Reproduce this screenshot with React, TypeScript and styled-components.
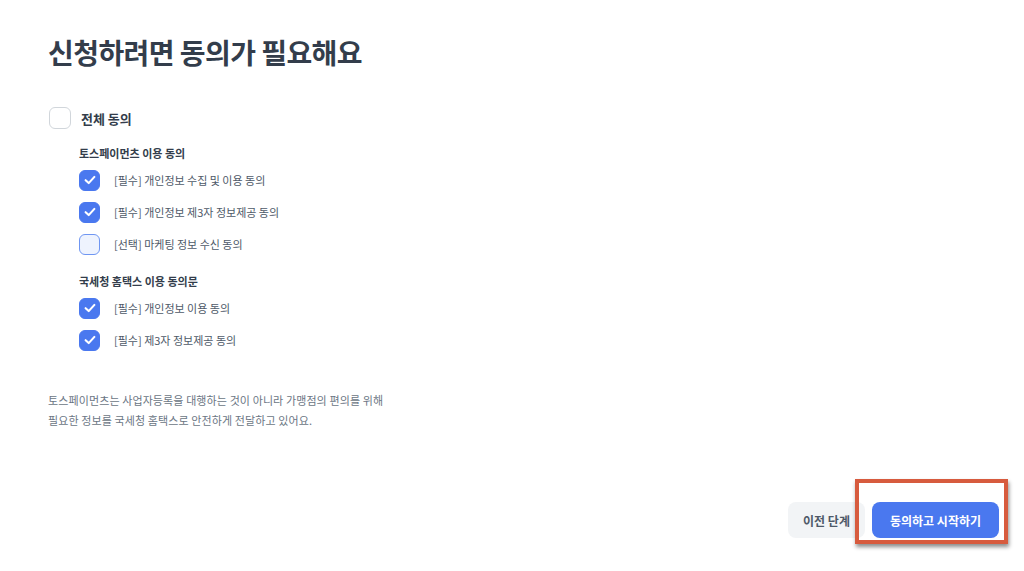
import React, { useState } from 'react';
import styled, { createGlobalStyle } from 'styled-components';

const palette = {
  white: '#ffffff',
  black: '#333d4b',
  grey700: '#4e5968',
  grey600: '#6b7684',
  grey300: '#d1d6db',
  grey100: '#f2f4f6',
  blue: '#4a78ef',
  blueLight: '#eef3fe',
  blueBorder: '#6f96f2',
  red: '#d75b3e',
};

const GlobalStyle = createGlobalStyle`
  html, body {
    margin: 0;
    padding: 0;
    background: ${palette.white};
  }
  body {
    font-family: 'Noto Sans CJK KR', 'Noto Sans', sans-serif;
    color: ${palette.black};
  }
  * {
    box-sizing: border-box;
  }
`;

const Page = styled.div`
  min-height: 100vh;
  display: flex;
  flex-direction: column;
  padding: 34px 25px 33px 48px;
`;

const Title = styled.h1`
  margin: 0;
  font-size: 28px;
  line-height: 36px;
  font-weight: 700;
  letter-spacing: -0.02em;
  color: ${palette.black};
`;

const AllRow = styled.label`
  display: flex;
  align-items: center;
  gap: 10px;
  margin: 37px 0 0 1px;
  height: 22px;
  cursor: pointer;
  font-size: 13px;
  font-weight: 600;
  color: ${palette.black};
`;

const Group = styled.div<{ gap: number }>`
  margin: ${(props) => props.gap}px 0 0 31px;
  display: flex;
  flex-direction: column;
`;

const GroupTitle = styled.div`
  height: 16px;
  line-height: 16px;
  font-size: 11px;
  font-weight: 700;
  color: ${palette.black};
  margin-bottom: 3px;
`;

const Row = styled.label`
  display: flex;
  align-items: center;
  gap: 14px;
  height: 32px;
  cursor: pointer;
  font-size: 11px;
  color: ${palette.grey700};
`;

const Box = styled.span<{ checked: boolean; size: number; soft?: boolean }>`
  flex: none;
  width: ${(props) => props.size}px;
  height: ${(props) => props.size}px;
  border-radius: 6px;
  display: flex;
  align-items: center;
  justify-content: center;
  background: ${(props) =>
    props.checked ? palette.blue : props.soft ? palette.blueLight : palette.white};
  border: 1.5px solid
    ${(props) =>
      props.checked ? palette.blue : props.soft ? palette.blueBorder : palette.grey300};
`;

const Notice = styled.p`
  margin: 34px 0 0;
  font-size: 11px;
  line-height: 20px;
  letter-spacing: 0.01em;
  color: ${palette.grey600};
`;

const Footer = styled.div`
  margin-top: auto;
  display: flex;
  justify-content: flex-end;
  gap: 7px;
`;

const Button = styled.button<{ primary?: boolean }>`
  height: 36px;
  border: none;
  border-radius: 8px;
  font-family: inherit;
  font-size: 12px;
  font-weight: 600;
  cursor: pointer;
  padding: ${(props) => (props.primary ? '0 18px' : '0 15px')};
  background: ${(props) => (props.primary ? palette.blue : palette.grey100)};
  color: ${(props) => (props.primary ? palette.white : palette.grey700)};
`;

const Highlight = styled.div`
  position: relative;
  display: flex;
`;

const HighlightFrame = styled.span`
  position: absolute;
  left: -17px;
  right: -9px;
  top: -23px;
  bottom: -6px;
  border: 4px solid ${palette.red};
  box-shadow: 1px 3px 4px rgba(0, 0, 0, 0.45);
  pointer-events: none;
`;

const Check = () => (
  <svg width="14" height="14" viewBox="0 0 14 14" fill="none">
    <path
      d="M2.6 7.2 L5.7 10.1 L11.4 3.9"
      stroke="#ffffff"
      strokeWidth="2.1"
      strokeLinecap="round"
      strokeLinejoin="round"
    />
  </svg>
);

type Item = { id: string; label: string; required: boolean };

const groups: { title: string; gap: number; items: Item[] }[] = [
  {
    title: '토스페이먼츠 이용 동의',
    gap: 16,
    items: [
      { id: 'privacy', label: '[필수] 개인정보 수집 및 이용 동의', required: true },
      { id: 'third', label: '[필수] 개인정보 제3자 정보제공 동의', required: true },
      { id: 'marketing', label: '[선택] 마케팅 정보 수신 동의', required: false },
    ],
  },
  {
    title: '국세청 홈택스 이용 동의문',
    gap: 13,
    items: [
      { id: 'hometaxPrivacy', label: '[필수] 개인정보 이용 동의', required: true },
      { id: 'hometaxThird', label: '[필수] 제3자 정보제공 동의', required: true },
    ],
  },
];

const App = () => {
  const [checked, setChecked] = useState<Record<string, boolean>>({
    privacy: true,
    third: true,
    marketing: false,
    hometaxPrivacy: true,
    hometaxThird: true,
  });

  const allChecked = Object.values(checked).every(Boolean);

  const toggle = (id: string) => setChecked((prev) => ({ ...prev, [id]: !prev[id] }));

  const toggleAll = () => {
    const next = !allChecked;
    setChecked((prev) =>
      Object.keys(prev).reduce((acc, key) => ({ ...acc, [key]: next }), {} as Record<string, boolean>)
    );
  };

  return (
    <>
      <GlobalStyle />
      <Page>
        <Title>신청하려면 동의가 필요해요</Title>

        <AllRow onClick={toggleAll}>
          <Box checked={allChecked} size={22}>
            {allChecked && <Check />}
          </Box>
          전체 동의
        </AllRow>

        {groups.map((group) => (
          <Group key={group.title} gap={group.gap}>
            <GroupTitle>{group.title}</GroupTitle>
            {group.items.map((item) => (
              <Row key={item.id} onClick={() => toggle(item.id)}>
                <Box checked={checked[item.id]} size={21} soft={!item.required}>
                  {checked[item.id] && <Check />}
                </Box>
                {item.label}
              </Row>
            ))}
          </Group>
        ))}

        <Notice>
          토스페이먼츠는 사업자등록을 대행하는 것이 아니라 가맹점의 편의를 위해
          <br />
          필요한 정보를 국세청 홈택스로 안전하게 전달하고 있어요.
        </Notice>

        <Footer>
          <Button>이전 단계</Button>
          <Highlight>
            <Button primary>동의하고 시작하기</Button>
            <HighlightFrame />
          </Highlight>
        </Footer>
      </Page>
    </>
  );
};

export default App;
